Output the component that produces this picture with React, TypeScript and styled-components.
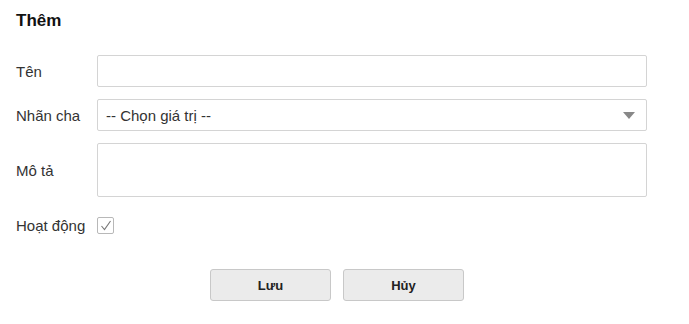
import styled, { createGlobalStyle } from "styled-components";

const GlobalStyle = createGlobalStyle`
  body {
    margin: 0;
    background: #fff;
    font-family: "Liberation Sans", Arial, sans-serif;
    color: #222;
  }
`;

const Wrapper = styled.div`
  width: 689px;
  padding: 11px 42px 0 16px;
  box-sizing: border-box;
`;

const Title = styled.h3`
  margin: 0;
  font-size: 17px;
  font-weight: bold;
  color: #111;
  line-height: 20px;
`;

const Form = styled.form`
  display: flex;
  flex-direction: column;
  gap: 12px;
  margin-top: 24px;
`;

const Row = styled.div<{ $top?: number }>`
  display: grid;
  grid-template-columns: 81px 1fr;
  align-items: center;
  margin-top: ${(p) => p.$top ?? 0}px;
`;

const Label = styled.label`
  font-size: 15px;
  color: #333;
`;

const fieldBase = `
  box-sizing: border-box;
  width: 100%;
  border: 1px solid #d4d4d4;
  border-radius: 2px;
  background: #fff;
  font-family: "Liberation Sans", Arial, sans-serif;
  font-size: 15px;
  color: #333;
  outline: none;
`;

const Input = styled.input`
  ${fieldBase}
  height: 32px;
  padding: 0 8px;
`;

const SelectBox = styled.div`
  ${fieldBase}
  height: 32px;
  padding: 0 8px;
  display: flex;
  align-items: center;
  justify-content: space-between;
`;

const Caret = styled.span`
  width: 0;
  height: 0;
  border-left: 6px solid transparent;
  border-right: 6px solid transparent;
  border-top: 7px solid #888;
  margin-right: 3px;
`;

const TextArea = styled.textarea`
  ${fieldBase}
  height: 54px;
  resize: none;
  padding: 6px 8px;
  display: block;
`;

const Check = styled.span`
  box-sizing: border-box;
  width: 17px;
  height: 17px;
  border: 1px solid #b8b8b8;
  border-radius: 2px;
  display: flex;
  align-items: center;
  justify-content: center;
  background: #fff;
`;

const Actions = styled.div`
  display: flex;
  gap: 12px;
  padding-left: 194px;
  margin-top: 35px;
`;

const Button = styled.button`
  width: 121px;
  height: 32px;
  background: #ebebeb;
  border: 1px solid #c8c8c8;
  border-radius: 3px;
  font-family: "Liberation Sans", Arial, sans-serif;
  font-size: 13px;
  font-weight: bold;
  color: #222;
  cursor: pointer;
`;

export default function App() {
  return (
    <Wrapper>
      <GlobalStyle />
      <Title>Thêm</Title>
      <Form>
        <Row>
          <Label>Tên</Label>
          <Input />
        </Row>
        <Row>
          <Label>Nhãn cha</Label>
          <SelectBox>
            <span>-- Chọn giá trị --</span>
            <Caret />
          </SelectBox>
        </Row>
        <Row>
          <Label>Mô tả</Label>
          <TextArea />
        </Row>
        <Row $top={8}>
          <Label>Hoạt động</Label>
          <Check>
            <svg width="12" height="11" viewBox="0 0 12 11">
              <path d="M1.5 6 L4.5 9.5 L10.5 1" fill="none" stroke="#777" strokeWidth="1.1" />
            </svg>
          </Check>
        </Row>
      </Form>
      <Actions>
        <Button type="button">Lưu</Button>
        <Button type="button">Hủy</Button>
      </Actions>
    </Wrapper>
  );
}
